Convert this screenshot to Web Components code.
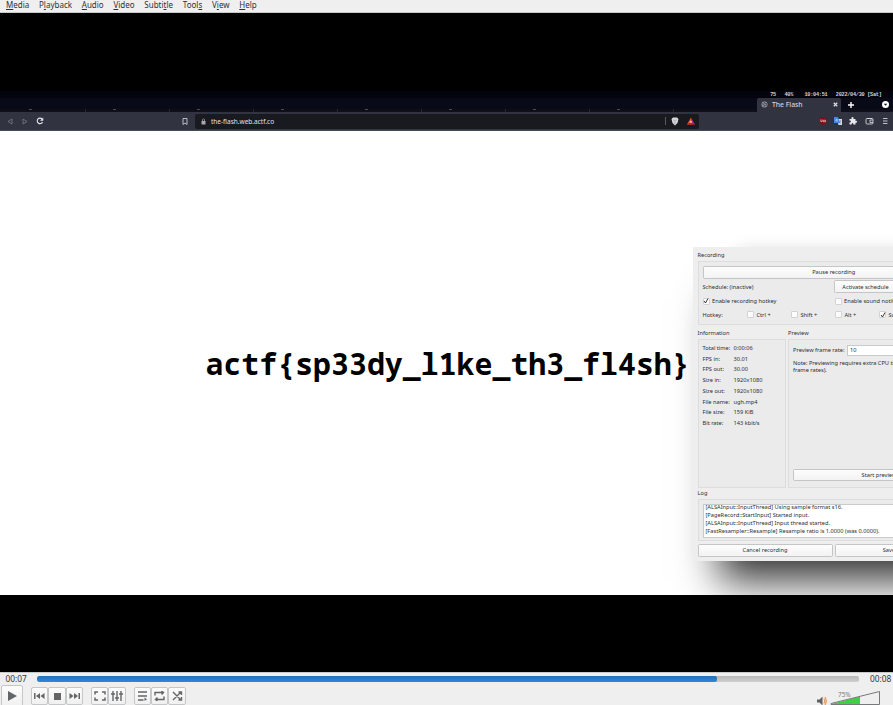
<!DOCTYPE html>
<html lang="en">
<head>
<meta charset="utf-8">
<title>VLC media player</title>
<style>
html,body{margin:0;height:100%;overflow:hidden;background:#000}
body{font-family:"Noto Sans","Open Sans",sans-serif}
</style>
</head>
<body>
<media-player></media-player>
<script>
const define = (name, css, html) => customElements.define(name, class extends HTMLElement {
  constructor() {
    super();
    this.attachShadow({mode: 'open'}).innerHTML = `<style>*{box-sizing:border-box}${css}</style>${html}`;
  }
});

define('menu-bar', `
:host{display:flex;height:13px;background:#efefef;border-bottom:1px solid #c9c9c9;padding-left:6px;gap:9.75px;font-size:8px;line-height:10px;color:#303234;white-space:nowrap;box-sizing:border-box}
u{text-underline-offset:1px;text-decoration-thickness:.7px}`,
`<span><u>M</u>edia</span><span>P<u>l</u>ayback</span><span><u>A</u>udio</span><span><u>V</u>ideo</span><span>Subti<u>t</u>le</span><span>Tool<u>s</u></span><span>V<u>i</u>ew</span><span><u>H</u>elp</span>`);

define('desktop-status', `
:host{display:flex;height:6.5px;background:#04040f;color:#d2d2d8;font:5.2px/9px "Liberation Mono",monospace;font-weight:bold;justify-content:flex-end;padding-right:11.5px;white-space:pre;box-sizing:border-box;letter-spacing:-.26px}
span{margin-left:8.500px}`,
`<span>75</span><span>40%</span><span style="margin-left:11.500px">10:04:51</span><span>2022/04/30 [Sat]</span>`);

define('tab-strip', `
:host{display:flex;height:14.5px;background:linear-gradient(#090a17 0 11px,#100f19 12px);justify-content:space-between;color:#d2d3da;box-sizing:border-box}
.old{display:flex;align-items:flex-end;padding-left:2px}
.old i{width:84px;height:3px;border-right:1px solid #262732;padding-left:27px}
.old i::before{content:"";display:block;width:3px;height:1px;background:#4a4b57}
.tail{display:flex;align-items:center;width:136px}
.tab{display:flex;align-items:center;width:84px;height:14px;background:#313440;border-radius:2px 2px 0 0;padding:0 3px 0 4px;font-size:6.8px;font-weight:500}
.tab span{margin-left:4px;flex:1;white-space:nowrap}
svg{display:block}`,
`<div class="old"><i></i><i></i><i></i><i></i><i></i><i></i><i></i><i></i></div>
<div class="tail"><div class="tab">
<svg width="7" height="7" viewBox="0 0 14 14"><circle cx="7" cy="7" r="6" fill="#9295a0"/><path d="M2 6c3-1 4 1 5 2l-1 4M6 2l2 3 4 1M9 9l3-1" stroke="#313440" stroke-width="1.7" fill="none"/></svg>
<span>The Flash</span><svg width="5" height="5" viewBox="0 0 10 10"><path d="M1.500 1.500l7 7M8.500 1.500l-7 7" stroke="#e4e4ea" stroke-width="2.200"/></svg></div>
<svg style="margin-left:6.5px" width="6" height="6" viewBox="0 0 12 12"><path d="M6 0v12M0 6h12" stroke="#fff" stroke-width="2.8"/></svg>
<svg style="margin-left:28px" width="7" height="7" viewBox="0 0 14 14"><circle cx="7" cy="7" r="7" fill="#fff"/><path d="M3.5 5.5h7L7 9.5z" fill="#151521"/></svg></div>`);

define('address-bar', `
:host{display:flex;height:19px;background:#313440;align-items:center;border-bottom:1px solid #474a57;box-sizing:border-box}
svg{display:block;flex:none}
.url{display:flex;align-items:center;width:504px;height:15px;background:#191a20;border-radius:2px;margin-left:7px;padding-left:6px;color:#e0e1e6;font-size:6.5px}
.url span{margin-left:5px;flex:1;white-space:nowrap}
.ext{display:flex;gap:7.200px;margin-left:120px;align-items:center}`,
`<svg style="margin-left:7px" width="6" height="7" viewBox="0 0 12 14"><path d="M10 2v10L2 7z" fill="none" stroke="#787b87" stroke-width="1.6"/></svg>
<svg style="margin-left:9px" width="6" height="7" viewBox="0 0 12 14"><path d="M2 2v10l8-5z" fill="none" stroke="#787b87" stroke-width="1.6"/></svg>
<svg style="margin-left:7.500px" width="8" height="8" viewBox="0 0 16 16"><path d="M13 10A5.5 5.5 0 1 1 12 4" fill="none" stroke="#e6e7ec" stroke-width="2.2"/><path d="M14.5 1v6.5H8z" fill="#e6e7ec"/></svg>
<svg style="margin-left:138.500px" width="6" height="7" viewBox="0 0 12 14"><path d="M2 1h8v12l-4-3-4 3z" fill="none" stroke="#d2d3da" stroke-width="1.7"/></svg>
<div class="url"><svg width="5" height="7" viewBox="0 0 10 14"><path d="M1 6h8v7H1z" fill="#a8a9b0"/><path d="M3 6V3q2-3 4 0v3" fill="none" stroke="#a8a9b0" stroke-width="1.5"/></svg>
<span>the-flash.web.actf.co</span>
<svg width="1" height="8"><path d="M0 0h1v8H0z" fill="#565862"/></svg>
<svg style="margin-left:5px" width="8" height="9" viewBox="0 0 16 18"><path d="M4 1h8l3 3-2 8-5 5-5-5L1 4z" fill="#d7d7dc"/><path d="M4 6l4 1 4-1M8 8v4M6 13l2-1 2 1" stroke="#8e9098" fill="none"/></svg>
<svg style="margin:0 4px 0 8px" width="8" height="8" viewBox="0 0 16 16"><path d="M8 1L0 15h8z" fill="#ff4d22"/><path d="M8 1l8 14H8z" fill="#a3267e"/><path d="M0 15l8-5 8 5z" fill="#c4201f"/><path d="M8 7l2.500 4h-5z" fill="#fff"/></svg></div>
<div class="ext">
<svg width="8" height="8" viewBox="0 0 16 16"><path d="M8 0q4 2 7 2v6q0 5-7 8-7-3-7-8V2q3 0 7-2z" fill="#8d0812"/><path d="M3.5 5v4h3V5M9 6.500h4v3H9z" stroke="#fff" fill="none" stroke-width="1.1"/></svg>
<svg width="8" height="8" viewBox="0 0 16 16"><path d="M6 4h10v12H9z" fill="#d8dae0"/><path d="M0 0h8l4 12H0z" fill="#4285e8"/><path d="M7 5H4v3h3V7" stroke="#fff" fill="none"/><path d="M10 8h5M12.500 7v2l-2 4m-.5-3 4 3" stroke="#6d7c91" fill="none"/></svg>
<svg width="8" height="8" viewBox="0 0 16 16"><path d="M1 4h4q-1-4 2-4t2 4h4v4q3-1 3 1.500T13 11v4H9q0-3-2-3t-2 3H1v-4q3 0 3-2T1 7z" fill="#e8e9ed"/></svg>
<svg width="9" height="8" viewBox="0 0 18 16"><rect x="2" y="3" width="14" height="11" rx="2" fill="none" stroke="#d7d8de" stroke-width="1.7"/><path d="M16 6h-6v5h6M4 3h10" fill="none" stroke="#d7d8de" stroke-width="1.7"/></svg>
<svg width="8" height="8" viewBox="0 0 16 16"><path d="M4 3h9M4 8h9M4 13h9" stroke="#d7d8de" stroke-width="1.7"/></svg></div>`);

define('push-button', `
:host{display:flex;align-items:center;justify-content:center;height:12.5px;border:1px solid #c4c5c6;border-radius:1.5px;background:linear-gradient(#fdfdfd,#f3f3f3);box-sizing:border-box;white-space:nowrap}`, `<slot></slot>`);

define('check-box', `
:host{display:flex;align-items:center;gap:2.5px;white-space:nowrap}
i{width:7px;height:7px;border:1px solid #d2d3d4;background:#fcfcfc;flex:none;border-radius:1px}
svg{display:none;margin:-.500px}
:host([on]) svg{display:block}`,
`<i><svg width="6" height="6" viewBox="0 0 12 12"><path d="M2 6l3 4 5-9" fill="none" stroke="#222" stroke-width="1.8"/></svg></i><slot></slot>`);

define('group-box', `
:host{display:flex;flex-direction:column}
.t{height:11px;line-height:11px;flex:none}
.b{flex:1;border:1px solid #dcddde;background:#ebebec;padding:0 4px;min-height:0}`,
`<div class="t"><slot name="title"></slot></div><div class="b"><slot></slot></div>`);

define('recorder-window', `
:host{display:block;width:281px;height:313.5px;background:#eeeeef;padding:3px 4px 0 4.5px;font-size:5.67px;color:#2c2f32;box-sizing:border-box;
box-shadow:10px 36px 38px -16px rgba(0,0,0,.78),40px 0 18px -6px rgba(0,0,0,.2)}
.row{display:flex;align-items:center;white-space:nowrap}
.mid{display:flex;gap:2.5px;height:159.5px;margin-top:3px}
dl{display:grid;grid-template-columns:31px 1fr;grid-auto-rows:10.72px;line-height:10.72px;margin:0;padding-top:3px;white-space:nowrap}
dd{margin:0}
.in{height:11px;border:1px solid #c9cacb;background:#fff;width:115px;padding-left:2px;line-height:9px;margin-left:2.500px}
.log{background:#fff;border:1px solid #c9cacb;height:34px;line-height:8px;white-space:nowrap;margin-top:3.500px;padding-left:2px;overflow:hidden}
.log div{margin-top:-2px}`,
`<group-box style="height:75px"><span slot="title">Recording</span>
<push-button style="margin-top:4px">Pause recording</push-button>
<div class="row" style="height:16px"><span style="width:131.500px">Schedule: (inactive)</span><push-button style="width:63px">Activate schedule</push-button></div>
<div class="row" style="height:13px"><check-box on style="width:132px">Enable recording hotkey</check-box><check-box>Enable sound notifications</check-box></div>
<div class="row" style="height:14px"><span style="width:44.500px">Hotkey:</span><check-box style="width:44px">Ctrl +</check-box><check-box style="width:44px">Shift +</check-box><check-box style="width:44px">Alt +</check-box><check-box on>Super +</check-box></div>
</group-box>
<div class="mid"><group-box style="width:88px"><span slot="title">Information</span>
<dl><dt>Total time:</dt><dd>0:00:06</dd><dt>FPS in:</dt><dd>30.01</dd><dt>FPS out:</dt><dd>30.00</dd><dt>Size in:</dt><dd>1920x1080</dd><dt>Size out:</dt><dd>1920x1080</dd><dt>File name:</dt><dd>ugh.mp4</dd><dt>File size:</dt><dd>159 KiB</dd><dt>Bit rate:</dt><dd>143 kbit/s</dd></dl></group-box>
<group-box style="flex:1"><span slot="title">Preview</span>
<div class="row" style="margin-top:4px;height:12px"><span>Preview frame rate:</span><div class="in">10</div></div>
<div style="line-height:7.200px;margin-top:3.500px;height:109px;white-space:nowrap">Note: Previewing requires extra CPU time (especially at high<br>frame rates).</div>
<push-button>Start preview</push-button></group-box></div>
<group-box style="height:53px;margin-top:.5px"><span slot="title">Log</span>
<div class="log"><div>[ALSAInput::InputThread] Using sample format s16.<br>[PageRecord::StartInput] Started input.<br>[ALSAInput::InputThread] Input thread started.<br>[FastResampler::Resample] Resample ratio is 1.0000 (was 0.0000).</div></div></group-box>
<div class="row" style="gap:2.500px;margin-top:3px"><push-button style="width:136px">Cancel recording</push-button><push-button style="width:136px">Save recording</push-button></div>`);

define('flag-page', `
:host{display:block;position:relative;height:464px;background:#fff;overflow:hidden}
.flag{font:bold 29.9px/40px "Noto Sans Mono","DejaVu Sans Mono",monospace;padding:213px 0 0 205.5px;color:#000;white-space:nowrap}
recorder-window{position:absolute;left:693px;top:116px}`,
`<div class="flag">actf{sp33dy_l1ke_th3_fl4sh}</div><recorder-window></recorder-window>`);

define('video-frame', `
:host{display:block;height:659px;background:#000;padding-top:78px;box-sizing:border-box}`,
`<desktop-status></desktop-status><tab-strip></tab-strip><address-bar></address-bar><flag-page></flag-page>`);

define('tool-button', `
:host{display:flex;align-items:center;justify-content:center;width:17.300px;height:18px;border:1px solid #c6c7c8;border-radius:2px;background:linear-gradient(#fcfcfc,#f0f0f0);box-sizing:border-box;flex:none}
:host([big]){width:22px;height:22px}`, `<slot></slot>`);

define('control-bar', `
:host{display:block;height:33px;background:#efefef;border-top:1px solid #c9c9c9;box-sizing:border-box;overflow:hidden;color:#34373a;font-size:8.300px}
.seek{display:flex;height:12px;align-items:center;line-height:12px}
.seek span{width:37px;padding-left:5.500px}
.track{width:822px;height:6px;border-radius:2px;background:linear-gradient(#b7b7b7,#cfcfcf);overflow:hidden}
.track i{display:block;width:680px;height:6px;background:linear-gradient(#236fba,#3187d8);border-radius:2px}
.btns{display:flex;align-items:center;height:22px;padding-left:1px}
.g{display:flex;margin-left:8.100px}
svg{display:block}
.vol{margin:2px 0 0 auto}`,
`<div class="seek"><span>00:07</span><div class="track"><i></i></div><span style="padding-left:11px;width:34px">00:08</span></div>
<div class="btns"><tool-button big><svg width="10" height="12"><path d="M1 1l9 5-9 5z" fill="#636567"/></svg></tool-button>
<div class="g"><tool-button><svg width="11" height="8"><path d="M0 1h1.500v6H0zM6 1v6L2 4zM10.500 1v6l-4-3z" fill="#636567"/></svg></tool-button><tool-button><svg width="7" height="7"><path d="M0 0h7v7H0z" fill="#636567"/></svg></tool-button><tool-button><svg width="11" height="8"><path d="M9.500 1H11v6H9.500zM5 1v6l4-3zM.5 1v6l4-3z" fill="#636567"/></svg></tool-button></div>
<div class="g"><tool-button><svg width="12" height="10" fill="none" stroke="#636567" stroke-width="1.500"><path d="M1 3.500V1h3M8 1h3v2.500M11 6.500V9H8M4 9H1V6.500"/></svg></tool-button><tool-button><svg width="12" height="10" fill="none" stroke="#636567" stroke-width="1.400"><path d="M2 0v10M6 0v10M10 0v10M0 3h4M4 7h4M8 3h4"/></svg></tool-button></div>
<div class="g"><tool-button><svg width="11" height="10"><path d="M1 1h9M1 5h9M1 9h5.500" fill="none" stroke="#636567" stroke-width="1.500"/><path d="M7.500 6.500v3.500l2.500-1.700z" fill="#636567"/></svg></tool-button><tool-button><svg width="11" height="10" fill="none" stroke="#636567" stroke-width="1.400"><path d="M1 4.500V1.500h8.500M7.500 0l2 1.500-2 2M10 5.500V8.500H1.500M3.500 6.500l-2 2 2 1.500"/></svg></tool-button><tool-button><svg width="11" height="10" fill="none" stroke="#636567" stroke-width="1.400"><path d="M1 1l8 8M1 9l8-8M6.500 1H9.500V4M6.500 9H9.500V6"/></svg></tool-button></div>
<svg class="vol" width="77" height="20" viewBox="0 0 77 20"><path d="M1 12.500h2.500l3-3v9l-3-3H1z" fill="#606264"/><path d="M7.800 11.500q2 2.500 0 5M9 10q2.500 4 0 8" fill="none" stroke="#ef9c55" stroke-width="1.200"/><path d="M15 17L44 9.600V18H15z" fill="#3fd043"/><path d="M63.500 4.500V17.500H15v-1z" fill="none" stroke="#77797b" stroke-width="1"/><text x="22" y="10" font-size="6.400" fill="#77797b">75%</text></svg></div>`);

define('media-player', `:host{display:flex;flex-direction:column;width:893px;height:705px;overflow:hidden}`,
`<menu-bar></menu-bar><video-frame></video-frame><control-bar></control-bar>`);
</script>
</body>
</html>
